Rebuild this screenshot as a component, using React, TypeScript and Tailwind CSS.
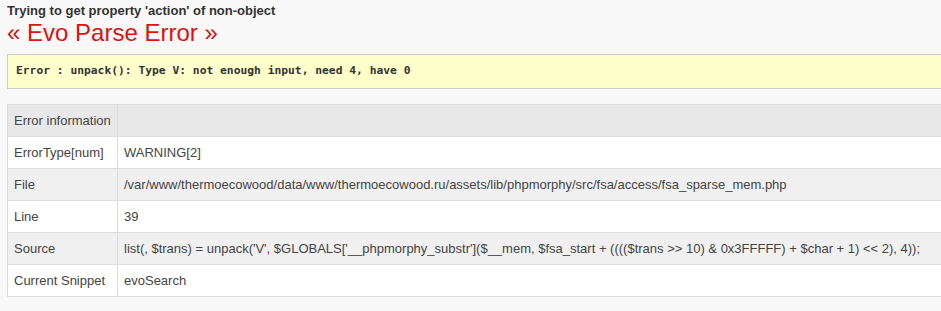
import React from 'react';

const rows: [string, string][] = [
  ['ErrorType[num]', 'WARNING[2]'],
  ['File', '/var/www/thermoecowood/data/www/thermoecowood.ru/assets/lib/phpmorphy/src/fsa/access/fsa_sparse_mem.php'],
  ['Line', '39'],
  [
    'Source',
    "list(, $trans) = unpack('V', $GLOBALS['__phpmorphy_substr']($__mem, $fsa_start + (((($trans >> 10) & 0x3FFFFF) + $char + 1) << 2), 4));",
  ],
  ['Current Snippet', 'evoSearch'],
];

export default function App() {
  return (
    <div className="w-[941px] h-[311px] overflow-hidden bg-[#f8f8f8] text-[#444] font-['Liberation_Sans',Arial,sans-serif]">
      <div className="pl-[7px] pt-[3px] w-[1000px]">
        <div className="text-[13px] font-bold text-[#333] leading-[16px]">Trying to get property 'action' of non-object</div>
        <h1 className="text-[24px] leading-[26px] text-[#dd1111] mt-[1px]">« Evo Parse Error »</h1>
        <div className="mt-[8px] h-[35px] border border-[#cccccc] bg-[#ffffcc] flex items-center pl-[8px]">
          <span className="font-['DejaVu_Sans_Mono',monospace] font-bold text-[11.3px] text-[#333]">
            Error : unpack(): Type V: not enough input, need 4, have 0
          </span>
        </div>
        <table className="mt-[15px] w-[1000px] table-fixed border-collapse text-[13px]">
          <tbody>
            <tr className="bg-[#e8e8e8] h-[32px]">
              <td className="w-[110px] border border-[#dddddd] px-[6px] whitespace-nowrap">Error information</td>
              <td className="border border-[#dddddd] px-[6px]"></td>
            </tr>
            {rows.map(([k, v], i) => (
              <tr key={k} className={`h-[32px] ${i % 2 === 0 ? 'bg-white' : 'bg-[#f0f0f0]'}`}>
                <td className="border border-[#dddddd] px-[6px] whitespace-nowrap">{k}</td>
                <td className="border border-[#dddddd] px-[6px] whitespace-nowrap">{v}</td>
              </tr>
            ))}
          </tbody>
        </table>
      </div>
    </div>
  );
}
